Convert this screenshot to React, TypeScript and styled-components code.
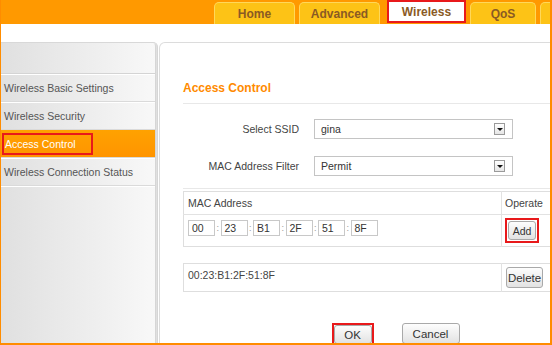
import styled, { createGlobalStyle } from 'styled-components';

const GlobalStyle = createGlobalStyle`
  html, body {
    margin: 0;
    padding: 0;
    background: #fff;
  }
  * {
    box-sizing: border-box;
  }
`;

// last tab is cut by the window edge, only its left side shows
const tabs = ['Home', 'Advanced', 'Wireless', 'QoS', ''];
const menu = [
  'Wireless Basic Settings',
  'Wireless Security',
  'Access Control',
  'Wireless Connection Status',
];
const macParts = ['00', '23', 'B1', '2F', '51', '8F'];

export default function App() {
  return (
    <>
      <GlobalStyle />
      <Frame>
        <Header>
          {tabs.map((t, i) => (
            <Tab key={i} $active={t === 'Wireless'}>
              {t}
            </Tab>
          ))}
        </Header>
        <Body>
          <Sidebar>
            <SideTop />
            {menu.map((m) => (
              <SideItem key={m} $active={m === 'Access Control'}>
                {m === 'Access Control' ? <Marked>{m}</Marked> : m}
              </SideItem>
            ))}
          </Sidebar>
          <Panel>
            <Heading>Access Control</Heading>
            <Form>
              <FormRow>
                <Label>Select SSID</Label>
                <Select>
                  gina
                  <Arrow />
                </Select>
              </FormRow>
              <FormRow>
                <Label>MAC Address Filter</Label>
                <Select>
                  Permit
                  <Arrow />
                </Select>
              </FormRow>
            </Form>
            <Table>
              <tbody>
                <tr>
                  <HeadCell>MAC Address</HeadCell>
                  <OpCell $head>Operate</OpCell>
                </tr>
                <tr>
                  <Cell $tall>
                    <MacInputs>
                      {macParts.map((p, i) => (
                        <MacGroup key={i}>
                          {i > 0 && <Colon>:</Colon>}
                          <MacInput>{p}</MacInput>
                        </MacGroup>
                      ))}
                    </MacInputs>
                  </Cell>
                  <OpCell>
                    <Highlight $pad={1}>
                      <Button $w={28} $h={19} $fs={10.5}>
                        Add
                      </Button>
                    </Highlight>
                  </OpCell>
                </tr>
              </tbody>
            </Table>
            <ListTable>
              <tbody>
                <tr>
                  <Cell $top>00:23:B1:2F:51:8F</Cell>
                  <OpCell>
                    <Button $w={37} $h={21} $fs={11.5} style={{ marginLeft: 1 }}>
                      Delete
                    </Button>
                  </OpCell>
                </tr>
              </tbody>
            </ListTable>
            <Actions>
              <Highlight $pad={0}>
                <Button $w={38} $h={19} $fs={11.5}>
                  OK
                </Button>
              </Highlight>
              <Button $w={58} $h={21} $fs={11.5}>
                Cancel
              </Button>
            </Actions>
          </Panel>
        </Body>
      </Frame>
    </>
  );
}

const Frame = styled.div`
  width: 552px;
  height: 345px;
  overflow: hidden;
  display: flex;
  flex-direction: column;
  border-left: 1px solid #ff8c00;
  border-right: 2px solid #ff8c00;
  border-bottom: 2px solid #ff8c00;
  font-family: 'Liberation Sans', Arial, sans-serif;
  color: #444;
`;

const Header = styled.div`
  height: 24px;
  flex-shrink: 0;
  background: #ff9900;
  display: flex;
  align-items: flex-end;
  gap: 4px;
  padding-left: 213px;
`;

const Tab = styled.div<{ $active?: boolean }>`
  flex-shrink: 0;
  width: ${(p) => (p.$active ? 79 : 81)}px;
  height: ${(p) => (p.$active ? 23 : 22)}px;
  margin-bottom: ${(p) => (p.$active ? 1 : 0)}px;
  margin-left: ${(p) => (p.$active ? 3 : 0)}px;
  border: ${(p) => (p.$active ? '2px solid #e8191b' : '1px solid #ffd85a')};
  border-bottom: ${(p) => (p.$active ? '2px solid #e8191b' : 'none')};
  border-radius: ${(p) => (p.$active ? '0' : '5px 5px 0 0')};
  background: ${(p) => (p.$active ? '#fff' : '#fdc316')};
  color: #8a5a24;
  font-weight: bold;
  font-size: 12px;
  display: flex;
  align-items: center;
  justify-content: center;

  &:nth-child(4) {
    width: 66px;
  }
`;

const Body = styled.div`
  flex: 1;
  display: flex;
  margin-top: 18px;
  min-height: 0;
`;

const Sidebar = styled.div`
  width: 157px;
  flex-shrink: 0;
  border-top-right-radius: 5px;
  border-top: 1px solid #d8d8d8;
  border-right: 3px double #d6d6d6;
  background: linear-gradient(to right, #e0e0e0, #f8f8f8);
`;

const SideTop = styled.div`
  height: 31px;
  border-bottom: 1px solid #d4d4d4;
  box-shadow: 0 1px 0 #fff;
`;

const SideItem = styled.div<{ $active?: boolean }>`
  height: 28px;
  padding-left: 3px;
  display: flex;
  align-items: center;
  font-size: 10.5px;
  color: ${(p) => (p.$active ? '#fff' : '#555')};
  background: ${(p) =>
    p.$active ? 'linear-gradient(to bottom, #ffa200, #ff9400)' : 'transparent'};
  border-bottom: 1px solid #dadada;
  box-shadow: 0 1px 0 #fff;
`;

const Marked = styled.span`
  margin-left: -2px;
  height: 22px;
  width: 91px;
  display: flex;
  align-items: center;
  padding-left: 1px;
  border: 2px solid #e8191b;
`;

const Panel = styled.div`
  width: 474px;
  flex-shrink: 0;
  margin-left: 1px;
  background: #fff;
  border: 1px solid #dcdcdc;
  border-bottom: none;
  border-top-left-radius: 6px;
  padding: 37px 24px 0 23px;
`;

const Heading = styled.div`
  font-size: 12px;
  font-weight: bold;
  color: #ff8a00;
  line-height: 16px;
  padding-bottom: 7px;
  border-bottom: 1px solid #e8e8e8;
`;

const Form = styled.div`
  display: flex;
  flex-direction: column;
  gap: 17px;
  padding: 15px 0 12px;
  border-bottom: 1px solid #e8e8e8;
`;

const FormRow = styled.div`
  display: flex;
  align-items: center;
  gap: 15px;
`;

const Label = styled.div`
  width: 116px;
  text-align: right;
  font-size: 10.5px;
  color: #444;
`;

const Select = styled.div`
  position: relative;
  width: 199px;
  height: 20px;
  border: 1px solid #c4c4c4;
  padding-left: 6px;
  display: flex;
  align-items: center;
  font-size: 10.5px;
  color: #333;
`;

const Arrow = styled.span`
  position: absolute;
  right: 7px;
  top: 3px;
  width: 11px;
  height: 12px;
  border: 1px solid #9a9a9a;
  background: linear-gradient(#fff, #e6e6e6);

  &::after {
    content: '';
    position: absolute;
    left: 2px;
    top: 4px;
    border-left: 3px solid transparent;
    border-right: 3px solid transparent;
    border-top: 3px solid #111;
  }
`;

const Table = styled.table`
  width: 426px;
  margin-top: 2px;
  border-collapse: collapse;
  border: 1px solid #dedede;
  font-size: 10.5px;
  color: #444;
`;

const ListTable = styled(Table)`
  margin-top: 16px;
`;

const HeadCell = styled.td`
  height: 23px;
  padding: 0 4px;
  border-bottom: 1px solid #e2e2e2;
`;

const Cell = styled.td<{ $tall?: boolean; $top?: boolean }>`
  height: ${(p) => (p.$tall ? 32 : 28)}px;
  padding: ${(p) => (p.$top ? '5px 4px 0' : '0 4px')};
  vertical-align: ${(p) => (p.$top ? 'top' : 'middle')};
  padding-bottom: ${(p) => (p.$tall ? 6 : 0)}px;
`;

const OpCell = styled.td<{ $head?: boolean }>`
  width: 107px;
  padding: 0 3px;
  border-left: 1px solid #e2e2e2;
  border-bottom: ${(p) => (p.$head ? '1px solid #e2e2e2' : 'none')};
  vertical-align: ${(p) => (p.$head ? 'middle' : 'top')};
  padding-top: ${(p) => (p.$head ? 0 : 3)}px;
`;

const MacInputs = styled.div`
  display: flex;
  align-items: center;
`;

const MacGroup = styled.div`
  display: flex;
  align-items: center;
`;

const Colon = styled.span`
  width: 5.5px;
  text-align: center;
  color: #999;
  font-size: 9px;
`;

const MacInput = styled.div`
  width: 27px;
  height: 16px;
  border: 1px solid #c8c8c8;
  padding-left: 3px;
  display: flex;
  align-items: center;
  font-size: 10.5px;
  color: #333;
`;

// red annotation box drawn around a control in the screenshot
const Highlight = styled.span<{ $pad: number }>`
  display: inline-flex;
  padding: ${(p) => p.$pad}px;
  border: 2px solid #e8191b;
`;

const Button = styled.button<{ $w: number; $h: number; $fs: number }>`
  width: ${(p) => p.$w}px;
  height: ${(p) => p.$h}px;
  padding: 0;
  border: 1px solid #a9a9a9;
  border-radius: 3px;
  background: linear-gradient(#fdfdfd, #e2e2e2);
  font-family: 'Liberation Sans', Arial, sans-serif;
  font-size: ${(p) => p.$fs}px;
  color: #333;
`;

const Actions = styled.div`
  display: flex;
  justify-content: center;
  align-items: flex-start;
  gap: 28px;
  margin-top: 31px;
`;
